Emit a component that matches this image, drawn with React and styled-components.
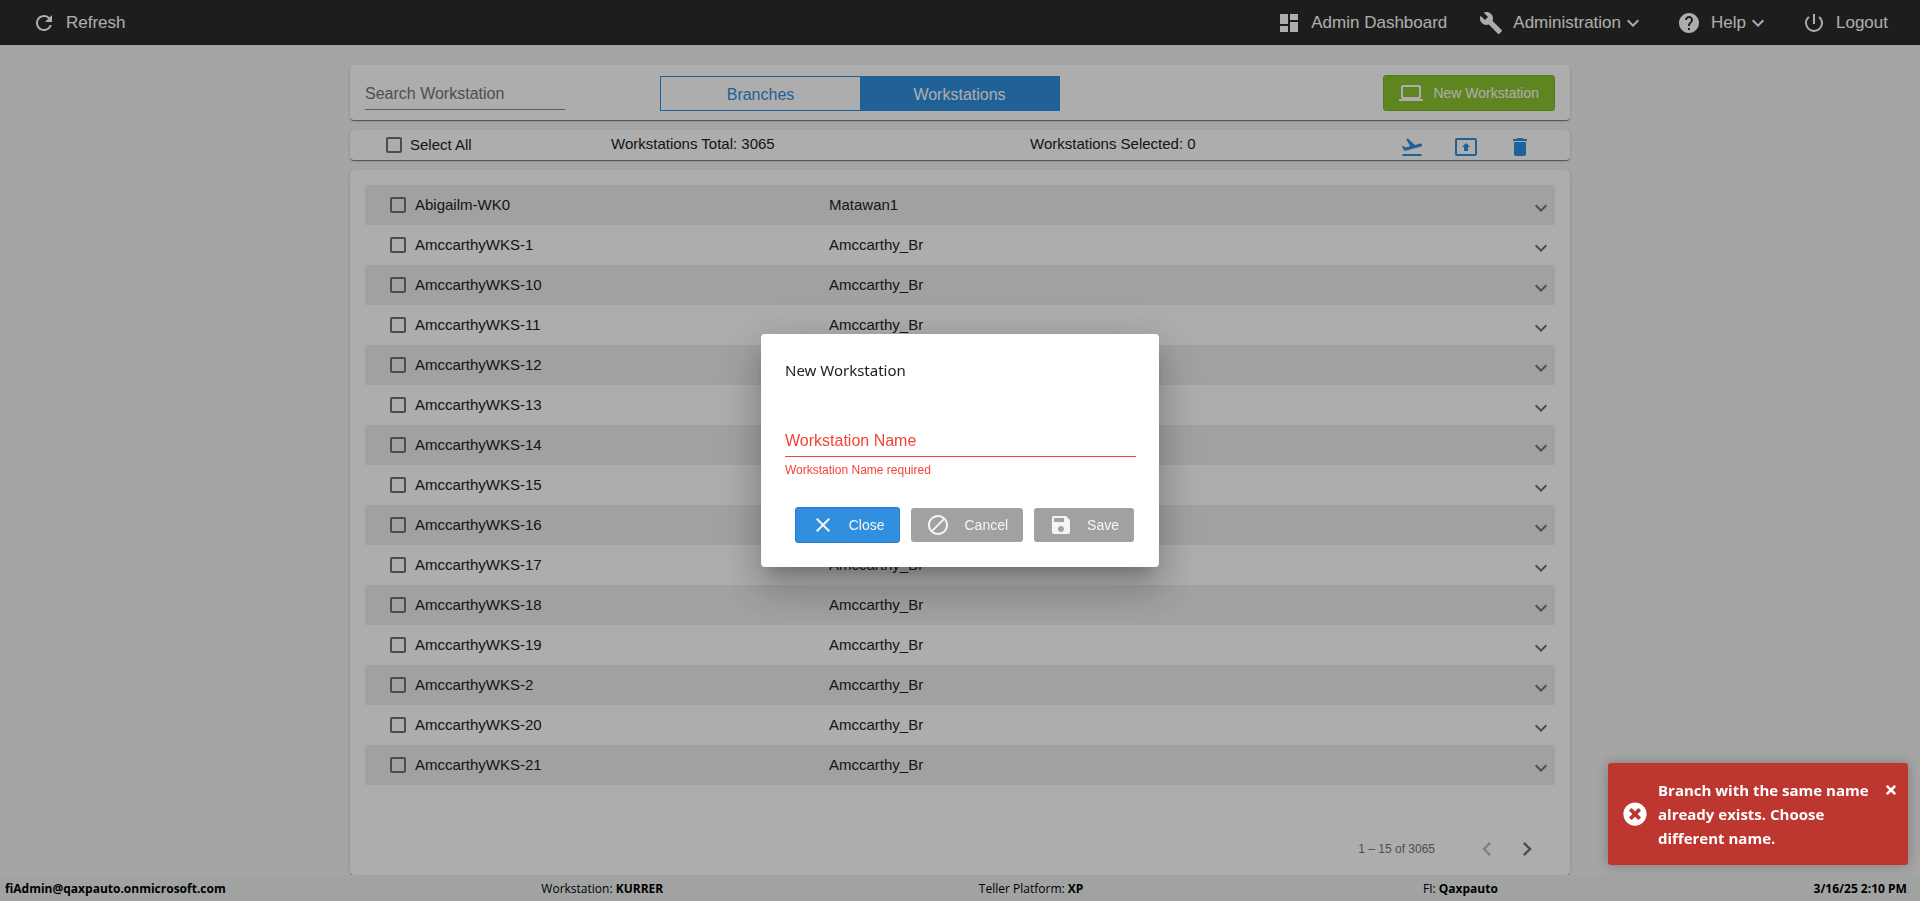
import React, { useState } from "react";
import styled, { createGlobalStyle } from "styled-components";
import {
  MdRefresh,
  MdDashboard,
  MdBuild,
  MdHelp,
  MdPowerSettingsNew,
  MdExpandMore,
  MdLaptop,
  MdFlightTakeoff,
  MdPresentToAll,
  MdDelete,
  MdChevronLeft,
  MdChevronRight,
  MdClose,
  MdDoNotDisturbAlt,
  MdSave,
} from "react-icons/md";
import { FaTimesCircle, FaTimes } from "react-icons/fa";

const workstations = [
  { name: "Abigailm-WK0", branch: "Matawan1" },
  { name: "AmccarthyWKS-1", branch: "Amccarthy_Br" },
  { name: "AmccarthyWKS-10", branch: "Amccarthy_Br" },
  { name: "AmccarthyWKS-11", branch: "Amccarthy_Br" },
  { name: "AmccarthyWKS-12", branch: "Amccarthy_Br" },
  { name: "AmccarthyWKS-13", branch: "Amccarthy_Br" },
  { name: "AmccarthyWKS-14", branch: "Amccarthy_Br" },
  { name: "AmccarthyWKS-15", branch: "Amccarthy_Br" },
  { name: "AmccarthyWKS-16", branch: "Amccarthy_Br" },
  { name: "AmccarthyWKS-17", branch: "Amccarthy_Br" },
  { name: "AmccarthyWKS-18", branch: "Amccarthy_Br" },
  { name: "AmccarthyWKS-19", branch: "Amccarthy_Br" },
  { name: "AmccarthyWKS-2", branch: "Amccarthy_Br" },
  { name: "AmccarthyWKS-20", branch: "Amccarthy_Br" },
  { name: "AmccarthyWKS-21", branch: "Amccarthy_Br" },
];

function Header() {
  return (
    <HeaderBar>
      <NavButton>
        <MdRefresh size={24} />
        <span>Refresh</span>
      </NavButton>
      <Nav>
        <NavLink href="#dashboard">
          <MdDashboard size={24} />
          <span>Admin Dashboard</span>
        </NavLink>
        <NavButton>
          <MdBuild size={24} />
          <span>Administration</span>
          <MdExpandMore size={24} />
        </NavButton>
        <NavButton>
          <MdHelp size={24} />
          <span>Help</span>
          <MdExpandMore size={24} />
        </NavButton>
        <NavButton>
          <MdPowerSettingsNew size={24} />
          <span>Logout</span>
        </NavButton>
      </Nav>
    </HeaderBar>
  );
}

function Toolbar() {
  return (
    <ToolbarCard>
      <SearchInput
        type="text"
        placeholder="Search Workstation"
        aria-label="Search Workstation"
      />
      <Toggle>
        <ToggleButton>Branches</ToggleButton>
        <ToggleButton $active>Workstations</ToggleButton>
      </Toggle>
      <NewButton>
        <MdLaptop size={24} />
        New Workstation
      </NewButton>
    </ToolbarCard>
  );
}

function SelectionBar() {
  return (
    <SelectionCard>
      <CheckLabel>
        <Checkbox type="checkbox" />
        <Text>Select All</Text>
      </CheckLabel>
      <Count>Workstations Total: 3065</Count>
      <Count>Workstations Selected: 0</Count>
      <Actions>
        <IconButton aria-label="Move">
          <MdFlightTakeoff size={24} />
        </IconButton>
        <IconButton aria-label="Assign">
          <MdPresentToAll size={24} />
        </IconButton>
        <IconButton aria-label="Delete">
          <MdDelete size={24} />
        </IconButton>
      </Actions>
    </SelectionCard>
  );
}

function WorkstationList() {
  return (
    <ListCard>
      <List>
        {workstations.map((item) => (
          <Row key={item.name}>
            <CheckLabel>
              <Checkbox type="checkbox" />
              <Text>{item.name}</Text>
            </CheckLabel>
            <Text>{item.branch}</Text>
            <ExpandButton aria-label={`Expand ${item.name}`}>
              <MdExpandMore size={24} />
            </ExpandButton>
          </Row>
        ))}
      </List>
      <Paginator>
        <span>1 – 15 of 3065</span>
        <PageButton aria-label="Previous page" disabled>
          <MdChevronLeft size={28} />
        </PageButton>
        <PageButton aria-label="Next page">
          <MdChevronRight size={28} />
        </PageButton>
      </Paginator>
    </ListCard>
  );
}

function NewWorkstationDialog() {
  const [name, setName] = useState("");
  return (
    <Dialog role="dialog" aria-labelledby="dialog-title">
      <h2 id="dialog-title">New Workstation</h2>
      <Field>
        <input
          id="workstation-name"
          type="text"
          value={name}
          placeholder=" "
          onChange={(e) => setName(e.target.value)}
        />
        <label htmlFor="workstation-name">Workstation Name</label>
      </Field>
      <FieldError>Workstation Name required</FieldError>
      <DialogActions>
        <DialogButton $primary>
          <MdClose size={24} />
          Close
        </DialogButton>
        <DialogButton disabled>
          <MdDoNotDisturbAlt size={24} />
          Cancel
        </DialogButton>
        <DialogButton disabled>
          <MdSave size={24} />
          Save
        </DialogButton>
      </DialogActions>
    </Dialog>
  );
}

function Toast() {
  return (
    <ToastBox role="alert">
      <FaTimesCircle size={24} />
      <p>Branch with the same name already exists. Choose different name.</p>
      <ToastClose aria-label="Dismiss">
        <FaTimes size={14} />
      </ToastClose>
    </ToastBox>
  );
}

function App() {
  return (
    <>
      <GlobalStyle />
      <Page>
        <Header />
        <Main>
          <Toolbar />
          <SelectionBar />
          <WorkstationList />
        </Main>
        <Footer>
          <b>fiAdmin@qaxpauto.onmicrosoft.com</b>
          <span>
            Workstation: <b>KURRER</b>
          </span>
          <span>
            Teller Platform: <b>XP</b>
          </span>
          <span className="fi">
            FI: <b>Qaxpauto</b>
          </span>
          <span>
            <b>3/16/25 2:10 PM</b>
            <span className="dot">.</span>
          </span>
        </Footer>
      </Page>
      <Backdrop>
        <NewWorkstationDialog />
      </Backdrop>
      <Toast />
    </>
  );
}

const GlobalStyle = createGlobalStyle`
  * {
    box-sizing: border-box;
  }
  body {
    margin: 0;
    background: #f3f3f3;
    color: #212121;
    font-family: "Liberation Sans", Arial, sans-serif;
    font-size: 15px;
  }
  button,
  input {
    font-family: inherit;
  }
  button {
    padding: 0;
    border: 0;
    background: none;
  }
  svg {
    display: block;
    flex-shrink: 0;
  }
`;

const Page = styled.div`
  min-height: 100vh;
  display: flex;
  flex-direction: column;
`;

const HeaderBar = styled.header`
  height: 45px;
  padding: 0 32px;
  display: flex;
  align-items: center;
  justify-content: space-between;
  background: #2c2c2c;
`;

const Nav = styled.nav`
  display: flex;
  gap: 32px;
`;

const NavButton = styled.button`
  display: flex;
  align-items: center;
  color: #fff;
  font-size: 17px;
  text-decoration: none;
  span {
    margin-left: 10px;
  }
`;

const NavLink = styled(NavButton).attrs({ as: "a" })``;

const Main = styled.main`
  width: 100%;
  max-width: 1220px;
  margin: 0 auto;
  padding-top: 20px;
  flex: 1;
  display: flex;
  flex-direction: column;
  gap: 10px;
`;

const Card = styled.section`
  border-radius: 4px;
  background: #fff;
  box-shadow: 0 2px 1px -1px rgba(0, 0, 0, 0.3), 0 1px 1px rgba(0, 0, 0, 0.24),
    0 1px 3px rgba(0, 0, 0, 0.12);
`;

const ToolbarCard = styled(Card)`
  height: 55px;
  padding: 0 15px 9px;
  display: grid;
  grid-template-columns: 295fr 400px 495fr;
  align-items: end;
`;

const SearchInput = styled.input`
  width: 200px;
  height: 34px;
  margin-bottom: 1px;
  padding: 2px 0 0;
  border: 0;
  border-bottom: 1px solid #8a8a8a;
  background: none;
  font-size: 16px;
  &::placeholder {
    color: #757575;
    opacity: 1;
  }
`;

const Toggle = styled.div`
  height: 35px;
  display: flex;
  border: 1px solid #308fdf;
`;

const ToggleButton = styled.button`
  padding-top: 2px;
  flex: 1;
  color: ${(props) => (props.$active ? "#fff" : "#308fdf")};
  background: ${(props) => (props.$active ? "#308fdf" : "#fff")};
  font-size: 16px;
`;

const NewButton = styled.button`
  height: 36px;
  padding: 0 15px;
  justify-self: end;
  display: flex;
  align-items: center;
  gap: 10px;
  border: 1px solid #7fb32b;
  border-radius: 3px;
  color: #fff;
  background: #8cc530;
  font-size: 14px;
`;

const SelectionCard = styled(Card)`
  height: 30px;
  padding: 0 38px 0 36px;
  display: grid;
  grid-template-columns: 225fr 419fr 370fr 132px;
  align-items: center;
`;

const CheckLabel = styled.label`
  display: flex;
  align-items: center;
  gap: 8px;
`;

const Checkbox = styled.input`
  appearance: none;
  width: 16px;
  height: 16px;
  margin: 0;
  border: 2px solid #707070;
  border-radius: 2px;
`;

const Text = styled.span`
  padding-bottom: 2px;
`;

const Count = styled.span`
  padding-bottom: 4px;
`;

const Actions = styled.div`
  padding-top: 4px;
  display: flex;
  justify-content: space-between;
`;

const IconButton = styled.button`
  color: #308fdf;
`;

const ListCard = styled(Card)`
  padding: 15px 15px 14px;
  flex: 1;
  display: flex;
  flex-direction: column;
  justify-content: space-between;
`;

const List = styled.ul`
  margin: 0;
  padding: 0;
  list-style: none;
`;

const Row = styled.li`
  height: 40px;
  padding: 0 2px 0 25px;
  display: grid;
  grid-template-columns: 439fr 700fr 24px;
  align-items: center;
  &:nth-child(odd) {
    background: #eee;
  }
  label {
    gap: 9px;
  }
`;

const ExpandButton = styled.button`
  padding-top: 5px;
  color: #707070;
`;

const Paginator = styled.div`
  padding-right: 8px;
  display: flex;
  align-items: center;
  justify-content: flex-end;
  color: #757575;
  font-size: 12px;
  span {
    margin-right: 32px;
  }
`;

const PageButton = styled.button`
  width: 40px;
  height: 24px;
  display: flex;
  align-items: center;
  justify-content: center;
  color: ${(props) => (props.disabled ? "#bdbdbd" : "#707070")};
`;

const Footer = styled.footer`
  height: 26px;
  padding: 0 10px 0 5px;
  display: flex;
  align-items: center;
  justify-content: space-between;
  background: #ecf0ee;
  color: #000;
  font-family: "Open Sans", "Noto Sans", sans-serif;
  font-size: 12px;
  .fi {
    margin-left: 24px;
  }
  .dot {
    color: #c4c8c6;
  }
`;

const Backdrop = styled.div`
  position: fixed;
  inset: 0;
  display: flex;
  align-items: center;
  justify-content: center;
  background: rgba(0, 0, 0, 0.32);
`;

const Dialog = styled.div`
  width: 398px;
  padding: 24px 23px 24px 24px;
  border-radius: 4px;
  background: #fff;
  box-shadow: 0 11px 15px -7px rgba(0, 0, 0, 0.2),
    0 24px 38px 3px rgba(0, 0, 0, 0.14), 0 9px 46px 8px rgba(0, 0, 0, 0.12);
  h2 {
    margin: 0 0 50px;
    font-family: "Noto Sans", "Open Sans", sans-serif;
    font-size: 15px;
    font-weight: 400;
    line-height: 24px;
  }
`;

const Field = styled.div`
  position: relative;
  input {
    width: 100%;
    height: 25px;
    padding: 0;
    display: block;
    border: 0;
    border-bottom: 1px solid #f44336;
    outline: none;
    font-size: 16px;
  }
  label {
    position: absolute;
    left: 0;
    top: 0;
    color: #f44336;
    font-size: 16px;
    line-height: 18px;
    pointer-events: none;
  }
  input:not(:placeholder-shown) + label {
    display: none;
  }
`;

const FieldError = styled.div`
  margin-top: 6px;
  color: #f44336;
  font-size: 12px;
  line-height: 14px;
`;

const DialogActions = styled.div`
  margin-top: 30px;
  padding-right: 2px;
  display: flex;
  align-items: center;
  justify-content: flex-end;
  gap: 11px;
`;

const DialogButton = styled.button`
  height: ${(props) => (props.$primary ? 36 : 34)}px;
  padding: 0 15px;
  display: flex;
  align-items: center;
  gap: 14px;
  border: ${(props) => (props.$primary ? "1px solid #2b80c8" : "0")};
  border-radius: 3px;
  color: #f5f5f5;
  background: ${(props) => (props.$primary ? "#308fdf" : "#a3a19f")};
  font-size: 14px;
`;

const ToastBox = styled.div`
  position: fixed;
  right: 12px;
  bottom: 36px;
  width: 300px;
  padding: 15px 10px 15px 15px;
  display: flex;
  align-items: center;
  border-radius: 3px;
  color: #fff;
  background: #bd362f;
  box-shadow: 0 0 12px rgba(0, 0, 0, 0.25);
  p {
    margin: 0 0 0 11px;
    flex: 1;
    font-family: "Open Sans", "Noto Sans", sans-serif;
    font-size: 15px;
    font-weight: 700;
    line-height: 24px;
  }
`;

const ToastClose = styled.button`
  align-self: flex-start;
  margin-top: 5px;
  color: #fff;
`;

export default App;
